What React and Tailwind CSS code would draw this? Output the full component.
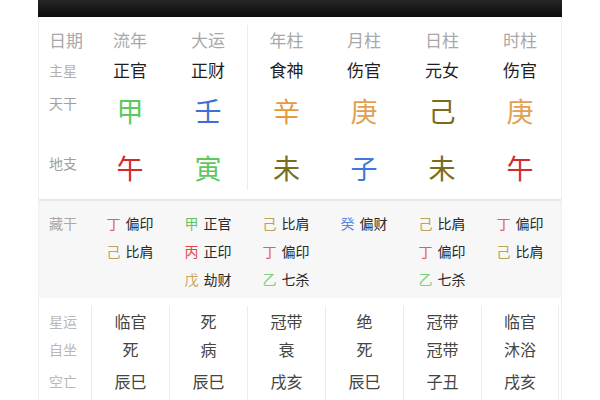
import React from "react";

const font = { fontFamily: '"Noto Sans CJK SC", "Noto Sans", sans-serif' };

const pillars = [
  { head: "流年", star: "正官", gan: "甲", ganC: "text-[#5cc95c]", zhi: "午", zhiC: "text-[#d42a2a]" },
  { head: "大运", star: "正财", gan: "壬", ganC: "text-[#3f6fd6]", zhi: "寅", zhiC: "text-[#5cc95c]" },
  { head: "年柱", star: "食神", gan: "辛", ganC: "text-[#e59a3c]", zhi: "未", zhiC: "text-[#7a6c1e]", line: true },
  { head: "月柱", star: "伤官", gan: "庚", ganC: "text-[#e3a04e]", zhi: "子", zhiC: "text-[#3d78e0]" },
  { head: "日柱", star: "元女", gan: "己", ganC: "text-[#7a6c1e]", zhi: "未", zhiC: "text-[#7a6c1e]" },
  { head: "时柱", star: "伤官", gan: "庚", ganC: "text-[#e3a04e]", zhi: "午", zhiC: "text-[#d42a2a]" },
];

const hidden = [
  [["丁", "text-[#e06060]", "偏印"], ["己", "text-[#b9a45a]", "比肩"]],
  [["甲", "text-[#62c462]", "正官"], ["丙", "text-[#e04848]", "正印"], ["戊", "text-[#c9a65a]", "劫财"]],
  [["己", "text-[#b9a45a]", "比肩"], ["丁", "text-[#e06060]", "偏印"], ["乙", "text-[#7ed07e]", "七杀"]],
  [["癸", "text-[#5a86e0]", "偏财"]],
  [["己", "text-[#b9a45a]", "比肩"], ["丁", "text-[#e06060]", "偏印"], ["乙", "text-[#7ed07e]", "七杀"]],
  [["丁", "text-[#e06060]", "偏印"], ["己", "text-[#b9a45a]", "比肩"]],
];

const fortune = [
  ["临官", "死", "辰巳"],
  ["死", "病", "辰巳"],
  ["冠带", "衰", "戌亥"],
  ["绝", "死", "辰巳"],
  ["冠带", "冠带", "子丑"],
  ["临官", "沐浴", "戌亥"],
];

export default function App() {
  return (
    <div className="w-[600px] h-[400px] bg-white overflow-hidden" style={font}>
      <div className="mx-[38px] w-[524px]">
        {/* top banner */}
        <div className="h-[17px] bg-gradient-to-b from-[#262626] to-[#0c0c0c]" />

        <div className="border-x border-[#f0f0f0]">
          {/* main pillars */}
          <div className="grid grid-cols-[52px_repeat(6,78px)] pt-[8px] pb-[9px] border-b-2 border-[#e6e6e6]">
            <div className="flex flex-col pl-[10px]">
              <div className="h-[30px] flex items-center text-[17px] text-[#a8a8a8]">日期</div>
              <div className="h-[30px] flex items-center text-[14px] text-[#b0b0b0]">主星</div>
              <div className="h-[52px] pt-[8px] text-[14px] leading-[20px] text-[#a0a0a0]">天干</div>
              <div className="h-[53px] pt-[16px] text-[14px] leading-[20px] text-[#a0a0a0]">地支</div>
            </div>
            {pillars.map((p, i) => (
              <div key={i} className={`flex flex-col items-center ${p.line ? "border-l border-[#ececec]" : ""}`}>
                <div className="h-[30px] flex items-center text-[17px] text-[#a8a8a8]">{p.head}</div>
                <div className="h-[30px] flex items-center text-[17px] text-[#1e1e1e]">{p.star}</div>
                <div className={`h-[52px] pt-[10px] text-[27px] leading-[32px] ${p.ganC}`}>{p.gan}</div>
                <div className={`h-[53px] pt-[15px] text-[27px] leading-[32px] ${p.zhiC}`}>{p.zhi}</div>
              </div>
            ))}
          </div>

          {/* hidden stems */}
          <div className="grid grid-cols-[52px_repeat(6,78px)] bg-[#f7f7f7] pt-[8px] pb-[5px]">
            <div className="pl-[10px] h-[28px] flex items-center text-[14px] text-[#a8a8a8]">藏干</div>
            {hidden.map((col, i) => (
              <div key={i} className="flex flex-col items-center">
                {col.map(([c, color, t], j) => (
                  <div key={j} className="h-[28px] flex items-center gap-[5px] text-[14px]">
                    <span className={color}>{c}</span>
                    <span className="text-[#2a2a2a]">{t}</span>
                  </div>
                ))}
              </div>
            ))}
          </div>

          {/* fortune */}
          <div className="grid grid-cols-[52px_repeat(6,78px)] pt-[8px]">
            <div className="pl-[10px] pt-[1px] flex flex-col text-[14px] text-[#b8b8b8]">
              <div className="h-[28px] flex items-center">星运</div>
              <div className="h-[28px] flex items-center">自坐</div>
              <div className="h-[28px] mt-[4px] flex items-center">空亡</div>
            </div>
            {fortune.map((col, i) => (
              <div
                key={i}
                className={`pt-[1px] h-[95px] flex flex-col items-center text-[16px] text-[#444] border-l border-[#ececec] ${i === 5 ? "border-r" : ""}`}
              >
                <div className="h-[28px] flex items-center">{col[0]}</div>
                <div className="h-[28px] flex items-center">{col[1]}</div>
                <div className="h-[28px] mt-[4px] flex items-center">{col[2]}</div>
              </div>
            ))}
          </div>
        </div>
      </div>
    </div>
  );
}
